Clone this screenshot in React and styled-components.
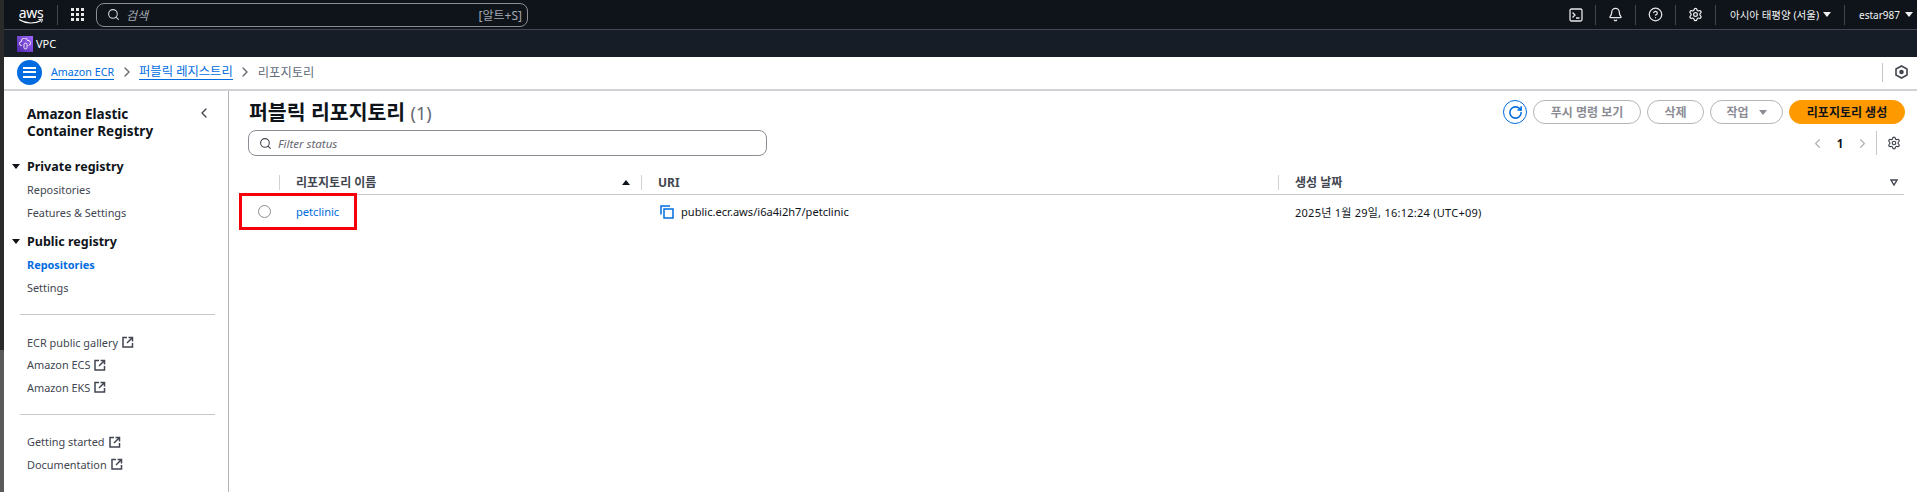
import React from "react";
import styled, { createGlobalStyle } from "styled-components";
import { Search, Bell, CircleHelp, Settings, RotateCw, ChevronLeft, ChevronRight } from "lucide-react";

const GlobalStyle = createGlobalStyle`
  html, body { margin: 0; padding: 0; background: #fff; }
  * { box-sizing: border-box; }
  body { font-family: "Noto Sans", "Noto Sans CJK KR", sans-serif; overflow: hidden; }
`;

const Page = styled.div`
  display: flex;
  width: 1917px;
  height: 492px;
  overflow: hidden;
`;

const Rail = styled.div`
  width: 4px;
  flex: none;
  background: linear-gradient(to bottom, #2a2a2a 0, #2a2a2a 350px, #5a5a5a 350px, #5a5a5a 100%);
`;

const Shell = styled.div`
  flex: 1;
  min-width: 0;
  display: flex;
  flex-direction: column;
`;

const TopNav = styled.header`
  height: 30px;
  flex: none;
  display: flex;
  align-items: center;
  background: #0f141a;
  border-bottom: 1px solid #424650;
  color: #fff;
  padding-left: 14px;
`;

const Logo = styled.div`
  position: relative;
  width: 26px;
  height: 22px;
  margin-right: 13px;
  font-size: 14px;
  line-height: 17px;
  text-align: center;
  letter-spacing: -0.3px;
  svg { position: absolute; left: 0; top: 14px; }
`;

const NavDivider = styled.span`
  width: 1px;
  height: 20px;
  flex: none;
  background: #424650;
`;

const GridIcon = styled.div`
  display: grid;
  grid-template-columns: repeat(3, 3px);
  gap: 2px;
  margin: 0 12px 0 13px;
  span { width: 3px; height: 3px; background: #e8e8e8; }
`;

const SearchBox = styled.div`
  width: 432px;
  height: 24px;
  display: flex;
  align-items: center;
  padding: 0 5px 0 10px;
  background: #0f141a;
  border: 1px solid #8c8c94;
  border-radius: 8px;
  font-size: 12px;
  color: #a4a9b3;
`;

const SearchHint = styled.span`
  margin-left: 6px;
  font-style: italic;
  flex: 1;
`;

const NavRight = styled.div`
  margin-left: auto;
  display: flex;
  align-items: center;
  height: 100%;
`;

const NavIcon = styled.div`
  width: 39px;
  display: flex;
  justify-content: center;
  align-items: center;
  color: #e8e8ea;
`;

const NavLabel = styled.span`
  font-size: ${(p) => p.$size || 10.5}px;
  color: #f2f3f3;
  white-space: nowrap;
`;

const Caret = styled.i`
  display: inline-block;
  width: 0;
  height: 0;
  border-left: ${(p) => p.$size || 4}px solid transparent;
  border-right: ${(p) => p.$size || 4}px solid transparent;
  border-top: ${(p) => (p.$size || 4) + 1}px solid ${(p) => p.$color || "#f2f3f3"};
`;

const Region = styled.div`
  display: flex;
  align-items: center;
  gap: 4px;
  width: 128px;
  padding-left: 14px;
`;

const Account = styled.div`
  display: flex;
  align-items: center;
  gap: 5px;
  width: 72px;
  padding-left: 14px;
`;

const ServiceBar = styled.div`
  height: 27px;
  flex: none;
  display: flex;
  align-items: center;
  gap: 3px;
  padding-left: 13px;
  background: #161d26;
  color: #fff;
  font-size: 11px;
`;

const ServiceIcon = styled.div`
  width: 16px;
  height: 16px;
  display: flex;
  align-items: center;
  justify-content: center;
  background: linear-gradient(45deg, #4d27a8, #a166ff);
`;

const Breadcrumbs = styled.nav`
  height: 34px;
  flex: none;
  display: flex;
  align-items: center;
  padding: 0 9px 2px 13px;
  border-bottom: 2px solid #d1d1d6;
  font-size: 12.3px;
  color: #5f6b7a;
`;

const MenuButton = styled.div`
  width: 25px;
  height: 25px;
  border-radius: 50%;
  background: #006ce0;
  display: flex;
  flex-direction: column;
  align-items: center;
  justify-content: center;
  gap: 2.5px;
  margin-right: 9px;
  span { width: 13px; height: 2px; background: #fff; }
`;

const Crumb = styled.a`
  color: #006ce0;
  border-bottom: 1px solid #006ce0;
  line-height: 14px;
  font-size: ${(p) => p.$size || 12.3}px;
`;

const CrumbArrow = styled(ChevronRight)`
  color: #656871;
  margin: 0 4.5px;
`;

const BreadcrumbTools = styled.div`
  margin-left: auto;
  display: flex;
  align-items: center;
  gap: 10px;
  height: 19px;
  padding-left: 12px;
  border-left: 1px solid #c6c6cd;
  color: #424650;
`;

const Body = styled.div`
  flex: 1;
  min-height: 0;
  display: flex;
`;

const Sidebar = styled.aside`
  width: 225px;
  flex: none;
  padding: 15px 0 0 23px;
  border-right: 1px solid #b4b4bb;
  position: relative;
  font-size: 10.9px;
  color: #424650;
`;

const SideTitle = styled.h2`
  margin: 0 0 15px;
  font-size: 13.5px;
  line-height: 17px;
  font-weight: 700;
  color: #0f141a;
`;

const SideCollapse = styled(ChevronLeft)`
  position: absolute;
  left: 192px;
  top: 14px;
  color: #424650;
`;

const SideHeading = styled.div`
  display: flex;
  align-items: center;
  gap: 7px;
  margin-left: -15px;
  height: 23px;
  font-size: 12.5px;
  font-weight: 700;
  color: #0f141a;
`;

const SideItem = styled.div`
  display: flex;
  align-items: center;
  gap: 4px;
  height: ${(p) => p.$h || 23}px;
  font-weight: ${(p) => (p.$active ? 700 : 400)};
  color: ${(p) => (p.$active ? "#006ce0" : "#424650")};
`;

const SideGroup = styled.div`
  margin-bottom: ${(p) => p.$gap || 0}px;
`;

const SideRule = styled.hr`
  margin: 15px 0 16px -7px;
  width: 195px;
  border: 0;
  border-top: 1px solid #c6c6cd;
`;

const Main = styled.main`
  flex: 1;
  min-width: 0;
  padding: 9px 12px 0 19px;
`;

const TitleRow = styled.div`
  display: flex;
  align-items: center;
  justify-content: space-between;
  height: 24px;
`;

const Title = styled.h1`
  margin: -3px 0 0 1px;
  font-size: 20.5px;
  font-weight: 700;
  color: #0f141a;
  span { font-weight: 400; font-size: 18px; color: #656871; }
`;

const Actions = styled.div`
  display: flex;
  align-items: center;
  gap: 6px;
`;

const RefreshButton = styled.div`
  width: 24px;
  height: 24px;
  border: 1px solid #006ce0;
  border-radius: 50%;
  display: flex;
  align-items: center;
  justify-content: center;
  color: #006ce0;
`;

const Pill = styled.div`
  width: ${(p) => p.$w}px;
  height: 24px;
  border-radius: 12px;
  border: 1px solid ${(p) => (p.$primary ? "#ff9900" : "#b4b4bb")};
  background: ${(p) => (p.$primary ? "#ff9900" : "#fff")};
  color: ${(p) => (p.$primary ? "#0f141a" : "#8c8c94")};
  font-size: 12px;
  font-weight: 700;
  display: flex;
  align-items: center;
  justify-content: center;
  gap: 10px;
`;

const FilterRow = styled.div`
  display: flex;
  align-items: center;
  justify-content: space-between;
  height: 26px;
  margin-top: 6px;
`;

const FilterBox = styled.div`
  width: 519px;
  height: 26px;
  display: flex;
  align-items: center;
  gap: 6px;
  padding-left: 10px;
  border: 1px solid #8c8c94;
  border-radius: 8px;
  font-size: 11.5px;
  font-style: italic;
  color: #656871;
`;

const Pager = styled.div`
  display: flex;
  align-items: center;
  font-size: 11.5px;
  font-weight: 700;
  color: #0f141a;
  svg { color: #b4b4bb; }
`;

const PagerNumber = styled.span`
  width: 30px;
  text-align: center;
`;

const PagerTools = styled.div`
  display: flex;
  align-items: center;
  height: 24px;
  margin-left: 6px;
  padding: 0 4px 0 10px;
  border-left: 1px solid #c6c6cd;
  svg { color: #424650; }
`;

const Table = styled.div`
  margin: 14px 1px 0 -8px;
`;

const HeadRow = styled.div`
  display: grid;
  grid-template-columns: 39px 362px 637px 1fr;
  align-items: center;
  height: 25px;
  border-bottom: 1px solid #c6c6cd;
  font-size: 12px;
  font-weight: 700;
  color: #424650;
`;

const HeadCell = styled.div`
  display: flex;
  align-items: center;
  justify-content: space-between;
  height: 15px;
  padding: 0 ${(p) => p.$pr || 0}px 0 16px;
  border-left: ${(p) => (p.$first ? "0" : "1px solid #d1d1d6")};
`;

const DataRow = styled.div`
  position: relative;
  display: grid;
  grid-template-columns: 39px 362px 637px 1fr;
  align-items: center;
  height: 33px;
  margin-bottom: 2px;
  color: #0f141a;
`;

const Radio = styled.span`
  justify-self: end;
  margin-right: 8px;
  width: 13px;
  height: 13px;
  border: 1.5px solid #8c8c94;
  border-radius: 50%;
`;

const Cell = styled.div`
  display: flex;
  align-items: center;
  gap: 7px;
  padding-left: ${(p) => p.$pl || 17}px;
  font-size: 11.1px;
`;

const DateCell = styled(Cell)`
  font-size: 11px;
  letter-spacing: 0.25px;
`;

const RepoLink = styled.a`
  color: #006ce0;
`;

const Highlight = styled.div`
  position: absolute;
  left: -1px;
  top: -2px;
  width: 118px;
  height: 37px;
  border: 3px solid #f5000a;
  pointer-events: none;
`;

const External = () => (
  <svg width="12" height="12" viewBox="0 0 12 12" fill="none" stroke="#424650" strokeWidth="1.5">
    <path d="M5 1.5H1v9.5h9.5V7" />
    <path d="M5 7l5-5M6.5 1.5h4v4" />
  </svg>
);

const TerminalIcon = () => (
  <svg width="14" height="14" viewBox="0 0 14 14" fill="none" stroke="#e8e8ea" strokeWidth="1.3">
    <rect x="1" y="1" width="12" height="12" rx="1.5" />
    <path d="M3.5 4.5L6 7 3.5 9.5M7 10h3.5" />
  </svg>
);

const CopyIcon = () => (
  <svg width="14" height="14" viewBox="0 0 14 14" fill="none" stroke="#006ce0" strokeWidth="1.5">
    <rect x="4" y="4" width="9" height="9" />
    <path d="M1 9.5V1h9" />
  </svg>
);

const CubeHex = () => (
  <svg width="13" height="14" viewBox="0 0 13 14" fill="none" stroke="#424650" strokeWidth="1.6">
    <path d="M6.5 1L12 4v6l-5.500 3L1 10V4z" />
    <circle cx="6.5" cy="7" r="1.500" fill="#424650" />
  </svg>
);

const CloudLock = () => (
  <svg width="12" height="12" viewBox="0 0 12 12" fill="none" stroke="#fff" strokeWidth="0.9">
    <path d="M3 7.500H2.500a2 2 0 0 1 0-4A3 3 0 0 1 8.500 2.500a2.500 2.500 0 0 1 1 5" />
    <rect x="5" y="5" width="3" height="6" rx="1.500" />
  </svg>
);

const HollowCaret = () => (
  <svg width="8" height="7" viewBox="0 0 8 7" fill="none" stroke="#424650" strokeWidth="1.4">
    <path d="M1 1h6L4 6z" />
  </svg>
);

const PRIVATE_ITEMS = ["Repositories", "Features & Settings"];
const LINKS_TOP = ["ECR public gallery", "Amazon ECS", "Amazon EKS"];
const LINKS_BOTTOM = ["Getting started", "Documentation"];

export default function App() {
  return (
    <Page>
      <GlobalStyle />
      <Rail />
      <Shell>
        <TopNav>
          <Logo>
            aws
            <svg width="26" height="7" viewBox="0 0 26 7" fill="none">
              <path d="M1 1.500C8 6 17 6 23 2.500" stroke="#fff" strokeWidth="1.200" />
              <path d="M20.500 1.500L24.500 1.200L23.500 4.500" stroke="#fff" strokeWidth="1" />
            </svg>
          </Logo>
          <NavDivider />
          <GridIcon>
            {Array.from({ length: 9 }).map((_, i) => (
              <span key={i} />
            ))}
          </GridIcon>
          <SearchBox>
            <Search size={13} color="#d1d5db" strokeWidth={2} />
            <SearchHint>검색</SearchHint>
            <span>[알트+S]</span>
          </SearchBox>
          <NavRight>
            <NavIcon><TerminalIcon /></NavIcon>
            <NavDivider />
            <NavIcon><Bell size={15} strokeWidth={2} /></NavIcon>
            <NavDivider />
            <NavIcon><CircleHelp size={15} strokeWidth={2} /></NavIcon>
            <NavDivider />
            <NavIcon><Settings size={15} strokeWidth={2} /></NavIcon>
            <NavDivider />
            <Region>
              <NavLabel>아시아 태평양 (서울)</NavLabel>
              <Caret />
            </Region>
            <NavDivider />
            <Account>
              <NavLabel $size={10}>estar987</NavLabel>
              <Caret />
            </Account>
          </NavRight>
        </TopNav>
        <ServiceBar>
          <ServiceIcon><CloudLock /></ServiceIcon>
          VPC
        </ServiceBar>
        <Breadcrumbs>
          <MenuButton>
            <span />
            <span />
            <span />
          </MenuButton>
          <Crumb $size={10.7}>Amazon ECR</Crumb>
          <CrumbArrow size={16} strokeWidth={2} />
          <Crumb>퍼블릭 레지스트리</Crumb>
          <CrumbArrow size={16} strokeWidth={2} />
          <span>리포지토리</span>
          <BreadcrumbTools><CubeHex /></BreadcrumbTools>
        </Breadcrumbs>
        <Body>
          <Sidebar>
            <SideCollapse size={16} strokeWidth={2} />
            <SideTitle>
              Amazon Elastic
              <br />
              Container Registry
            </SideTitle>
            <SideGroup $gap={6}>
              <SideHeading>
                <Caret $color="#0f141a" />
                Private registry
              </SideHeading>
              {PRIVATE_ITEMS.map((item) => (
                <SideItem key={item}>{item}</SideItem>
              ))}
            </SideGroup>
            <SideGroup>
              <SideHeading>
                <Caret $color="#0f141a" />
                Public registry
              </SideHeading>
              <SideItem $active>Repositories</SideItem>
              <SideItem>Settings</SideItem>
            </SideGroup>
            <SideRule />
            {LINKS_TOP.map((item) => (
              <SideItem key={item} $h={22.5}>
                {item} <External />
              </SideItem>
            ))}
            <SideRule />
            {LINKS_BOTTOM.map((item) => (
              <SideItem key={item} $h={22.5}>
                {item} <External />
              </SideItem>
            ))}
          </Sidebar>
          <Main>
            <TitleRow>
              <Title>
                퍼블릭 리포지토리 <span>(1)</span>
              </Title>
              <Actions>
                <RefreshButton><RotateCw size={15} strokeWidth={2.5} /></RefreshButton>
                <Pill $w={108}>푸시 명령 보기</Pill>
                <Pill $w={57}>삭제</Pill>
                <Pill $w={73}>
                  작업 <Caret $size={4} $color="#8c8c94" />
                </Pill>
                <Pill $w={116} $primary>리포지토리 생성</Pill>
              </Actions>
            </TitleRow>
            <FilterRow>
              <FilterBox>
                <Search size={13} color="#424650" strokeWidth={2} />
                Filter status
              </FilterBox>
              <Pager>
                <ChevronLeft size={15} strokeWidth={2} />
                <PagerNumber>1</PagerNumber>
                <ChevronRight size={15} strokeWidth={2} />
                <PagerTools><Settings size={14} strokeWidth={2} /></PagerTools>
              </Pager>
            </FilterRow>
            <Table>
              <HeadRow>
                <HeadCell $first />
                <HeadCell $pr={11}>
                  리포지토리 이름
                  <Caret style={{ transform: "rotate(180deg)" }} $color="#0f141a" />
                </HeadCell>
                <HeadCell>URI</HeadCell>
                <HeadCell $pr={6}>
                  생성 날짜
                  <HollowCaret />
                </HeadCell>
              </HeadRow>
              <DataRow>
                <Radio />
                <Cell><RepoLink>petclinic</RepoLink></Cell>
                <Cell $pl={19}>
                  <CopyIcon />
                  public.ecr.aws/i6a4i2h7/petclinic
                </Cell>
                <DateCell>2025년 1월 29일, 16:12:24 (UTC+09)</DateCell>
                <Highlight />
              </DataRow>
            </Table>
          </Main>
        </Body>
      </Shell>
    </Page>
  );
}
